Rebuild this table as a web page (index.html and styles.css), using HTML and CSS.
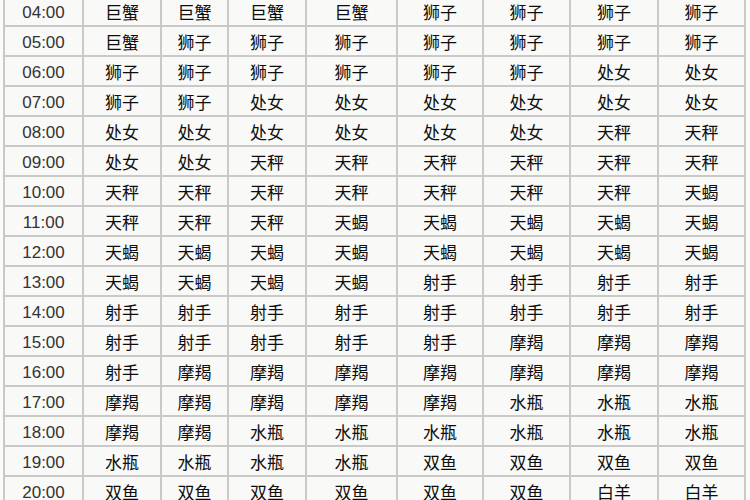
FILE: index.html
```html
<!DOCTYPE html>
<html lang="zh-CN">
<head>
<meta charset="utf-8">
<title>星座时间表</title>
<link rel="stylesheet" href="styles.css">
</head>
<body>
<div class="table" id="t"></div>
<script>
var rows = [
["04:00","巨蟹 巨蟹 巨蟹 巨蟹 狮子 狮子 狮子 狮子"],
["05:00","巨蟹 狮子 狮子 狮子 狮子 狮子 狮子 狮子"],
["06:00","狮子 狮子 狮子 狮子 狮子 狮子 处女 处女"],
["07:00","狮子 狮子 处女 处女 处女 处女 处女 处女"],
["08:00","处女 处女 处女 处女 处女 处女 天秤 天秤"],
["09:00","处女 处女 天秤 天秤 天秤 天秤 天秤 天秤"],
["10:00","天秤 天秤 天秤 天秤 天秤 天秤 天秤 天蝎"],
["11:00","天秤 天秤 天秤 天蝎 天蝎 天蝎 天蝎 天蝎"],
["12:00","天蝎 天蝎 天蝎 天蝎 天蝎 天蝎 天蝎 天蝎"],
["13:00","天蝎 天蝎 天蝎 天蝎 射手 射手 射手 射手"],
["14:00","射手 射手 射手 射手 射手 射手 射手 射手"],
["15:00","射手 射手 射手 射手 射手 摩羯 摩羯 摩羯"],
["16:00","射手 摩羯 摩羯 摩羯 摩羯 摩羯 摩羯 摩羯"],
["17:00","摩羯 摩羯 摩羯 摩羯 摩羯 水瓶 水瓶 水瓶"],
["18:00","摩羯 摩羯 水瓶 水瓶 水瓶 水瓶 水瓶 水瓶"],
["19:00","水瓶 水瓶 水瓶 水瓶 双鱼 双鱼 双鱼 双鱼"],
["20:00","双鱼 双鱼 双鱼 双鱼 双鱼 双鱼 白羊 白羊"]
];
var t = document.getElementById('t');
var html = '';
rows.forEach(function(r){
  html += '<div class="cell time">' + r[0] + '</div>';
  r[1].split(' ').forEach(function(s){ html += '<div class="cell sign">' + s + '</div>'; });
});
t.innerHTML = html;
</script>
</body>
</html>
```

FILE: styles.css
```css
html, body {
  margin: 0;
  padding: 0;
  background: #fbfbf9;
  overflow: hidden;
}
.table {
  display: grid;
  grid-template-columns: 77px 76px 65px 76px 89px 84px 85px 86px 85px;
  grid-auto-rows: 28px;
  gap: 2px;
  padding: 2px;
  background: #c9c9c7;
  width: max-content;
  margin: -5px 0 0 3px;
}
.cell {
  background: #f9f9f7;
  display: flex;
  align-items: center;
  justify-content: center;
  color: #222;
  font-size: 17px;
}
.time {
  font-family: "Liberation Sans", Arial, sans-serif;
  color: #333;
  padding-top: 3px;
}
.sign {
  font-family: "Noto Sans CJK SC", "Noto Sans", sans-serif;
  font-weight: 400;
  color: #0d0d0d;
  padding-top: 1px;
}
```
